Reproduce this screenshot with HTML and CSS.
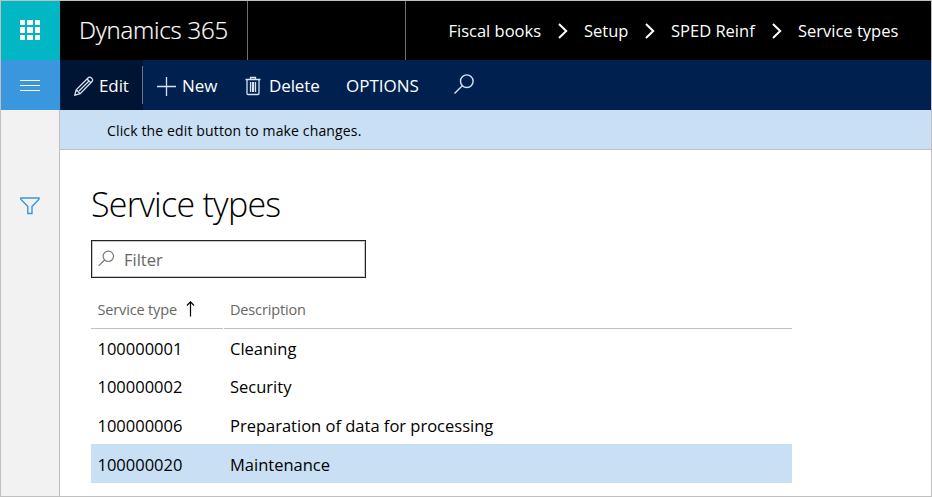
FILE: index.html
```html
<!DOCTYPE html>
<html lang="en">
<head>
<meta charset="utf-8">
<title>Service types</title>
<link rel="stylesheet" href="styles.css">
</head>
<body>
<div class="app">
  <header class="topbar">
    <div class="launcher">
      <svg width="20" height="20" viewBox="0 0 20 20" shape-rendering="crispEdges"><path d="M0 0h5v5H0zM7 0h6v5H7zM15 0h5v5h-5zM0 7h5v6H0zM7 7h6v6H7zM15 7h5v6h-5zM0 15h5v5H0zM7 15h6v5H7zM15 15h5v5h-5z"/></svg>
    </div>
    <div class="brand"><span>Dynamics 365</span></div>
    <div class="company"></div>
    <nav class="crumbs">
      <span class="crumb c-books">Fiscal books</span>
      <svg class="chev" width="10" height="16" viewBox="0 0 10 16"><path d="M1 1l7.200 7L1 15"/></svg>
      <span class="crumb c-setup">Setup</span>
      <svg class="chev" width="10" height="16" viewBox="0 0 10 16"><path d="M1 1l7.200 7L1 15"/></svg>
      <span class="crumb c-sped">SPED Reinf</span>
      <svg class="chev" width="10" height="16" viewBox="0 0 10 16"><path d="M1 1l7.200 7L1 15"/></svg>
      <span class="crumb c-types">Service types</span>
    </nav>
  </header>
  <div class="actionbar">
    <div class="menu"><i></i><i></i><i></i></div>
    <div class="action edit">
      <svg width="20" height="20" viewBox="0 0 20 20"><path d="M.8 19.200l1.400-5.400L14 2c1-1 2.200-1.200 3.200-.2l.8.8c1 1 .8 2.200-.2 3.200L6.200 17.600zM2.200 13.800l4 3.800M13 3l3.800 3.800M5 15L14.800 5.200"/></svg>
      <span>Edit</span>
    </div>
    <div class="action new">
      <svg width="20" height="20" viewBox="0 0 20 20"><path d="M10.500 1v19M1 10.500h19"/></svg>
      <span>New</span>
    </div>
    <div class="action delete">
      <svg width="16" height="20" viewBox="0 0 16 20"><path d="M.5 3.500h15M5.500 3V1.500h5V3M2 4v13.500q0 1 1 1h10q1 0 1-1V4M5.500 6v10M7.500 6v10M8.500 6v10M10.500 6v10"/></svg>
      <span>Delete</span>
    </div>
    <div class="action options"><span>OPTIONS</span></div>
    <svg class="find" width="20" height="20" viewBox="0 0 20 20"><circle cx="12.800" cy="7.200" r="6.300"/><path d="M8.300 11.700L.5 19.500"/></svg>
  </div>
  <div class="body">
    <aside class="rail">
      <svg width="20" height="18" viewBox="0 0 20 18"><path d="M.8 1h18.200v1.200L12 9.500v7H7.800v-7L.8 2.200z"/></svg>
    </aside>
    <main class="main">
      <div class="message"><span>Click the edit button to make changes.</span></div>
      <section class="page">
        <h1><span>Service types</span></h1>
        <div class="filter">
          <svg width="17" height="17" viewBox="0 0 17 17"><circle cx="10.300" cy="6.300" r="5.200"/><path d="M6.600 10L.7 15.900"/></svg>
          <span>Filter</span>
        </div>
        <div class="grid">
          <div class="row head">
            <div class="cell type"><span>Service type</span><svg width="9" height="16" viewBox="0 0 9 16"><path d="M4.500 15.500V1M1 4.500l3.500-3.700L8 4.500"/></svg></div>
            <div class="cell desc"><span>Description</span></div>
          </div>
          <div class="row"><div class="cell type">100000001</div><div class="cell desc">Cleaning</div></div>
          <div class="row"><div class="cell type">100000002</div><div class="cell desc">Security</div></div>
          <div class="row tall"><div class="cell type">100000006</div><div class="cell desc">Preparation of data for processing</div></div>
          <div class="row tall selected"><div class="cell type">100000020</div><div class="cell desc">Maintenance</div></div>
        </div>
      </section>
    </main>
  </div>
</div>
</body>
</html>
```
FILE: styles.css
```css
* { box-sizing: border-box; }
body {
  margin: 0;
  font-family: "Open Sans", "Noto Sans", sans-serif;
  font-size: 16.5px;
  color: #000;
  overflow: hidden;
}
svg { display: block; flex: none; fill: none; }
span { white-space: nowrap; }
.app {
  width: 932px;
  height: 497px;
  border: 1px solid #c0c0c0;
  display: flex;
  flex-direction: column;
  background: #fff;
}
.topbar { display: flex; height: 59px; background: #000; color: #fff; }
.launcher { width: 59px; padding: 19px 0 0 19px; background: #00b7c3; }
.launcher svg { fill: #fff; }
.brand {
  width: 188px;
  padding-left: 19px;
  border-right: 1px solid #707070;
  font-size: 24px;
  font-weight: 300;
  letter-spacing: -0.2px;
  line-height: 58px;
  -webkit-text-stroke: 0.2px #fff;
}
.company { width: 158px; border-right: 1px solid #707070; }
.crumbs { flex: 1; display: flex; align-items: center; padding-left: 42px; }
.crumb { line-height: 59px; height: 59px; }
.c-books { width: 110px; padding-left: 0.5px; }
.c-setup { width: 61px; margin-left: 16px; }
.c-sped { width: 101px; margin-left: 16px; }
.c-types { margin-left: 16px; }
.chev { stroke: #fff; stroke-width: 2; }

.actionbar { display: flex; height: 50px; background: #00204f; color: #fff; }
.menu { width: 59px; padding: 20px 20px 0 19px; background: #3a96dd; display: flex; flex-direction: column; gap: 4px; }
.menu i { height: 1px; background: #fff; }
.action { display: flex; align-items: center; font-size: 17px; letter-spacing: -0.1px; line-height: 52px; }
.action span { height: 50px; }
.action svg { stroke: #d5e2f2; stroke-width: 1.3; }
.edit {
  width: 82px;
  margin-left: 1px;
  padding-left: 13px;
  gap: 5px;
  background: #001433;
}
.edit svg { margin-top: 2px; }
.edit::after { content: ""; width: 1px; height: 38px; margin-left: auto; flex: none; background: #66758d; }
.new { width: 102px; padding-left: 13px; gap: 6px; }
.new svg { margin-top: 2px; }
.delete { width: 101px; gap: 8px; }
.delete svg { margin-top: 2px; }
.options { width: 108px; letter-spacing: 0; }
.find { stroke: #d5e2f2; stroke-width: 1.4; margin-top: 14px; }

.body { display: flex; flex: 1; }
.rail { width: 59px; background: #f2f2f2; border-right: 1px solid #c0c0c0; padding: 87px 0 0 19px; }
.rail svg { stroke: #3a96dd; stroke-width: 1.4; }
.main { flex: 1; }
.message {
  height: 40px;
  padding-left: 47px;
  background: #c8dff4;
  border-bottom: 1px solid #c0c0c0;
  font-size: 14px;
  letter-spacing: 0.14px;
  line-height: 41px;
}
.page { padding: 26px 0 0 31px; }
h1 { margin: 0; height: 64px; line-height: 56px; font-size: 34px; font-weight: 300; letter-spacing: -0.75px; }
.filter {
  width: 275px;
  height: 38px;
  border: 1px solid #222;
  box-shadow: inset 0 0 0 1px #c8c8c8;
  display: flex;
  align-items: center;
  gap: 9px;
  padding-left: 6px;
  color: #666;
  font-size: 16.5px;
}
.filter svg { stroke: #777; stroke-width: 1.2; margin-bottom: 1px; }
.grid { width: 701px; margin-top: 12px; }
.row { display: flex; height: 38px; line-height: 40px; }
.row.tall { height: 39px; line-height: 42px; }
.type { width: 132px; padding-left: 6.5px; }
.desc { flex: 1; padding-left: 7px; }
.head { height: 39px; gap: 1px; font-size: 14.5px; letter-spacing: -0.15px; color: #666; }
.head .cell { display: flex; border-bottom: 1px solid #c0c0c0; }
.head .desc { padding-left: 6px; }
.head svg { stroke: #000; stroke-width: 1.2; margin: 11px 0 0 9px; }
.selected { background: #c8dff4; }
```
